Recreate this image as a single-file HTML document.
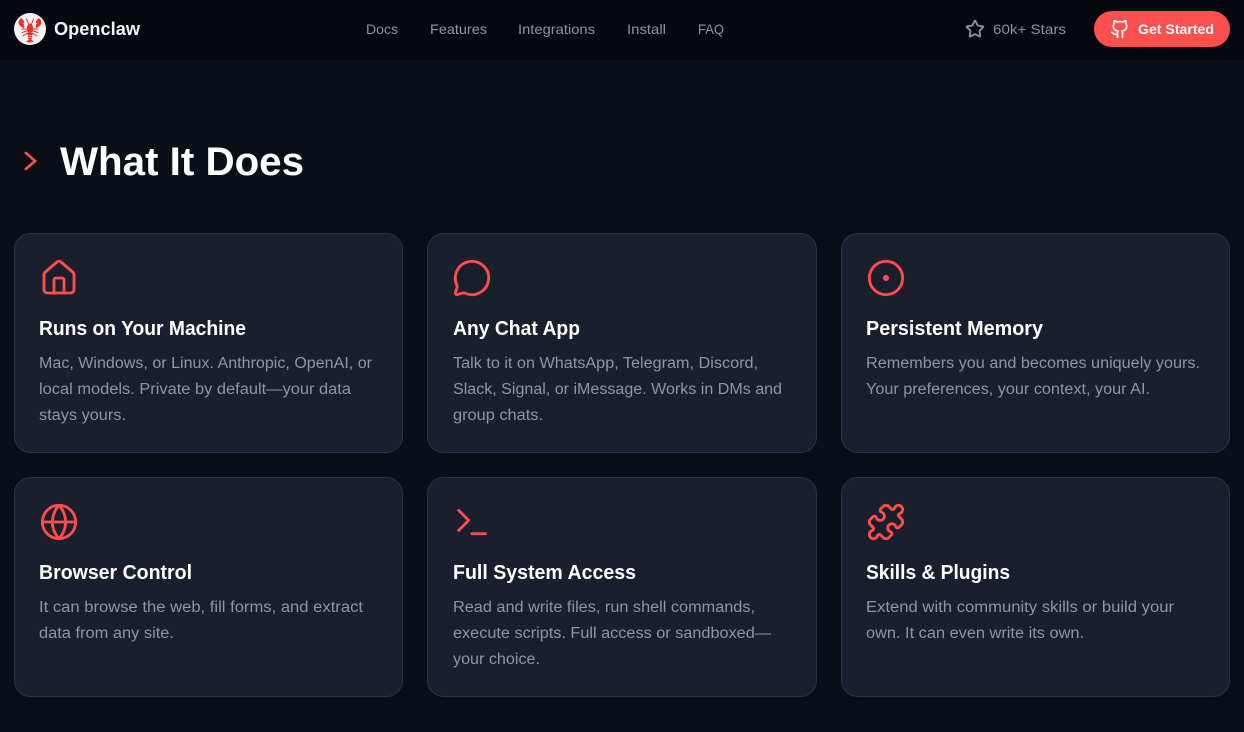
<!DOCTYPE html>
<html lang="en"><head><meta charset="utf-8"><title>Openclaw</title>
<style>
html,body{margin:0;padding:0;background:#0a0e16;width:1244px;height:732px;overflow:hidden}
svg{display:block}
text{font-family:"Liberation Sans",sans-serif}
.nav{font-size:14px;fill:#8f939d}
.t{font-size:20px;font-weight:700;fill:#fff}
.d{font-size:15.5px;fill:#8f95a2}
.i{fill:none;stroke:#ff4d4d;stroke-width:1.7;stroke-linecap:round;stroke-linejoin:round}
.c{fill:#1a1f2e;stroke:#2d323e;stroke-width:1}
</style></head><body>
<svg width="1244" height="732" viewBox="0 0 1244 732" xmlns="http://www.w3.org/2000/svg">
<rect width="1244" height="732" fill="#0a0e16"/>
<rect width="1244" height="60" fill="#05080f"/>
<!-- logo -->
<circle cx="30" cy="29" r="16" fill="#f4f4f4"/>
<g fill="#e8302c" stroke="#e8302c" stroke-linecap="round">
<path d="M21 18.500c-2.500 1.500-3 5-1 7 1 1 2.500 1.500 3.500 2.500l1-1c-.7-1.200-1-2-.8-3l-1.400-.8 1.600-.4c.2-1.800-1-3.500-2.900-4.300z" stroke-width=".4"/>
<path d="M39 18.500c2.500 1.500 3 5 1 7-1 1-2.500 1.500-3.500 2.500l-1-1c.7-1.200 1-2 .8-3l1.400-.8-1.600-.4c-.2-1.800 1-3.500 2.900-4.300z" stroke-width=".4"/>
<ellipse cx="30" cy="28.500" rx="3.200" ry="5" stroke="none"/>
<path d="M27 33h6l-.6 2h-4.800zM27.600 35.500h4.800l-.5 1.800h-3.800zM28 37.800h4l-.3 1.700h-3.400z" stroke="none"/>
<path d="M26.500 41.500l3.500-2 3.500 2-3.500 .8z" stroke-width=".5"/>
<path d="M28.500 24l-2-5M31.500 24l2-5M27 29h-5M33 29h5M27 31l-5 1.500M33 31l5 1.500M27.500 33l-4.500 3M32.500 33l4.500 3" fill="none" stroke-width="1"/>
</g>
<text x="54" y="35" font-size="18" font-weight="700" fill="#f5f5f5" textLength="86" lengthAdjust="spacingAndGlyphs">Openclaw</text>
<text class="nav" x="366" y="34" textLength="32" lengthAdjust="spacingAndGlyphs">Docs</text>
<text class="nav" x="430" y="34" textLength="57" lengthAdjust="spacingAndGlyphs">Features</text>
<text class="nav" x="518" y="34" textLength="77" lengthAdjust="spacingAndGlyphs">Integrations</text>
<text class="nav" x="627" y="34" textLength="39" lengthAdjust="spacingAndGlyphs">Install</text>
<text class="nav" x="698" y="34" textLength="26" lengthAdjust="spacingAndGlyphs">FAQ</text>
<g transform="translate(965 19) scale(.8333)" fill="none" stroke="#8f939d" stroke-width="2.200" stroke-linecap="round" stroke-linejoin="round">
<path d="M11.525 2.295a.53.53 0 0 1 .95 0l2.310 4.679a2.123 2.123 0 0 0 1.595 1.160l5.166.756a.53.53 0 0 1 .294.904l-3.736 3.638a2.123 2.123 0 0 0-.611 1.878l.882 5.140a.53.530 0 0 1-.771.560l-4.618-2.428a2.122 2.122 0 0 0-1.973 0L6.396 21.010a.53.530 0 0 1-.770-.560l.881-5.139a2.122 2.122 0 0 0-.611-1.879L2.160 9.795a.53.53 0 0 1 .294-.906l5.165-.755a2.122 2.122 0 0 0 1.597-1.160z"/></g>
<text class="nav" x="993" y="34" textLength="73" lengthAdjust="spacingAndGlyphs">60k+ Stars</text>
<rect x="1094" y="11" width="136" height="36" rx="18" fill="#ff4f4f"/>
<g transform="translate(1110 19) scale(.8333)" fill="none" stroke="#fff" stroke-width="2" stroke-linecap="round" stroke-linejoin="round">
<path d="M15 22v-4a4.800 4.800 0 0 0-1-3.500c3 0 6-2 6-5.500.08-1.250-.27-2.480-1-3.500.28-1.150.28-2.350 0-3.500 0 0-1 0-3 1.500-2.640-.5-5.360-.5-8 0C6 2 5 2 5 2c-.3 1.150-.3 2.350 0 3.500A5.403 5.403 0 0 0 4 9c0 3.500 3 5.500 6 5.500-.39.49-.68 1.050-.85 1.650-.17.6-.22 1.230-.15 1.850v4"/><path d="M9 18c-4.510 2-5-2-7-2"/></g>
<text x="1138" y="34" font-size="14" font-weight="700" fill="#fff" textLength="76" lengthAdjust="spacingAndGlyphs">Get Started</text>
<!-- heading -->
<g transform="translate(14.500 145) scale(1.3333)" fill="none" stroke="#ff4d4d" stroke-width="2" stroke-linecap="round" stroke-linejoin="miter"><path d="m8.500 18 7-6-7-6" stroke-linejoin="round"/></g>
<text x="60" y="175" font-size="40" font-weight="700" fill="#fff" textLength="244" lengthAdjust="spacingAndGlyphs">What It Does</text>
<!-- cards -->
<rect class="c" x="14.500" y="233.500" width="388" height="219" rx="16"/>
<rect class="c" x="427.500" y="233.500" width="389" height="219" rx="16"/>
<rect class="c" x="841.500" y="233.500" width="388" height="219" rx="16"/>
<rect class="c" x="14.500" y="477.500" width="388" height="219" rx="16"/>
<rect class="c" x="427.500" y="477.500" width="389" height="219" rx="16"/>
<rect class="c" x="841.500" y="477.500" width="388" height="219" rx="16"/>
<!-- icons -->
<g class="i" transform="translate(39 258) scale(1.6667)"><path d="M15 21v-8a1 1 0 0 0-1-1h-4a1 1 0 0 0-1 1v8"/><path d="M3 10a2 2 0 0 1 .709-1.528l7-5.999a2 2 0 0 1 2.582 0l7 5.999A2 2 0 0 1 21 10v9a2 2 0 0 1-2 2H5a2 2 0 0 1-2-2z"/></g>
<g class="i" transform="translate(452 258) scale(1.6667)"><path d="M2.992 16.342a2 2 0 0 1 .094 1.167l-1.065 3.290a1 1 0 0 0 1.236 1.168l3.413-.998a2 2 0 0 1 1.099.092 10 10 0 1 0-4.777-4.719"/></g>
<g class="i" transform="translate(866 258) scale(1.6667)"><circle cx="12" cy="12" r="10"/><circle cx="12" cy="12" r="1"/></g>
<g class="i" transform="translate(39 502) scale(1.6667)"><circle cx="12" cy="12" r="10"/><path d="M12 2a15.300 15.300 0 0 1 4 10 15.300 15.300 0 0 1-4 10 15.300 15.300 0 0 1-4-10 15.300 15.300 0 0 1 4-10z"/><path d="M2 12h20"/></g>
<g class="i" transform="translate(452 502) scale(1.6667)"><path d="m4 17 6-6-6-6"/><path d="M12 19h8"/></g>
<g class="i" transform="translate(866 502) scale(1.6667)"><path d="M19.439 7.850c-.049.322.059.648.289.878l1.568 1.568c.47.47.706 1.087.706 1.704s-.235 1.233-.706 1.704l-1.611 1.611a.98.98 0 0 1-.837.276c-.47-.07-.802-.48-.968-.925a2.501 2.501 0 1 0-3.214 3.214c.446.166.855.497.925.968a.979.979 0 0 1-.276.837l-1.610 1.610a2.404 2.404 0 0 1-1.705.707 2.402 2.402 0 0 1-1.704-.706l-1.568-1.568a1.026 1.026 0 0 0-.877-.29c-.493.074-.84.504-1.020.968a2.500 2.500 0 1 1-3.237-3.237c.464-.18.894-.527.967-1.020a1.026 1.026 0 0 0-.289-.877l-1.568-1.568A2.402 2.402 0 0 1 1.998 12c0-.617.236-1.234.706-1.704L4.230 8.770c.24-.24.581-.353.917-.303.515.077.877.528 1.073 1.010a2.500 2.500 0 1 0 3.259-3.259c-.482-.196-.933-.558-1.010-1.073-.05-.336.062-.676.303-.917l1.525-1.525A2.402 2.402 0 0 1 12 1.998c.617 0 1.234.236 1.704.706l1.568 1.568c.23.23.556.338.877.29.493-.074.84-.504 1.020-.968a2.500 2.500 0 1 1 3.237 3.237c-.464.18-.894.527-.967 1.020Z"/></g>
<!-- card text -->
<text class="t" x="39" y="335" textLength="207" lengthAdjust="spacingAndGlyphs">Runs on Your Machine</text>
<text class="d" x="39" y="368" textLength="333" lengthAdjust="spacingAndGlyphs">Mac, Windows, or Linux. Anthropic, OpenAI, or</text>
<text class="d" x="39" y="394" textLength="312" lengthAdjust="spacingAndGlyphs">local models. Private by default—your data</text>
<text class="d" x="39" y="420" textLength="87" lengthAdjust="spacingAndGlyphs">stays yours.</text>
<text class="t" x="453" y="335" textLength="127" lengthAdjust="spacingAndGlyphs">Any Chat App</text>
<text class="d" x="453" y="368" textLength="305" lengthAdjust="spacingAndGlyphs">Talk to it on WhatsApp, Telegram, Discord,</text>
<text class="d" x="453" y="394" textLength="329" lengthAdjust="spacingAndGlyphs">Slack, Signal, or iMessage. Works in DMs and</text>
<text class="d" x="453" y="420" textLength="90" lengthAdjust="spacingAndGlyphs">group chats.</text>
<text class="t" x="866" y="335" textLength="177" lengthAdjust="spacingAndGlyphs">Persistent Memory</text>
<text class="d" x="866" y="368" textLength="334" lengthAdjust="spacingAndGlyphs">Remembers you and becomes uniquely yours.</text>
<text class="d" x="866" y="394" textLength="284" lengthAdjust="spacingAndGlyphs">Your preferences, your context, your AI.</text>
<text class="t" x="39" y="579" textLength="153" lengthAdjust="spacingAndGlyphs">Browser Control</text>
<text class="d" x="39" y="612" textLength="324" lengthAdjust="spacingAndGlyphs">It can browse the web, fill forms, and extract</text>
<text class="d" x="39" y="638" textLength="135" lengthAdjust="spacingAndGlyphs">data from any site.</text>
<text class="t" x="453" y="579" textLength="183" lengthAdjust="spacingAndGlyphs">Full System Access</text>
<text class="d" x="453" y="612" textLength="302" lengthAdjust="spacingAndGlyphs">Read and write files, run shell commands,</text>
<text class="d" x="453" y="638" textLength="318" lengthAdjust="spacingAndGlyphs">execute scripts. Full access or sandboxed—</text>
<text class="d" x="453" y="664" textLength="87" lengthAdjust="spacingAndGlyphs">your choice.</text>
<text class="t" x="866" y="579" textLength="144" lengthAdjust="spacingAndGlyphs">Skills &amp; Plugins</text>
<text class="d" x="866" y="612" textLength="308" lengthAdjust="spacingAndGlyphs">Extend with community skills or build your</text>
<text class="d" x="866" y="638" textLength="218" lengthAdjust="spacingAndGlyphs">own. It can even write its own.</text>
</svg>
</body></html>
